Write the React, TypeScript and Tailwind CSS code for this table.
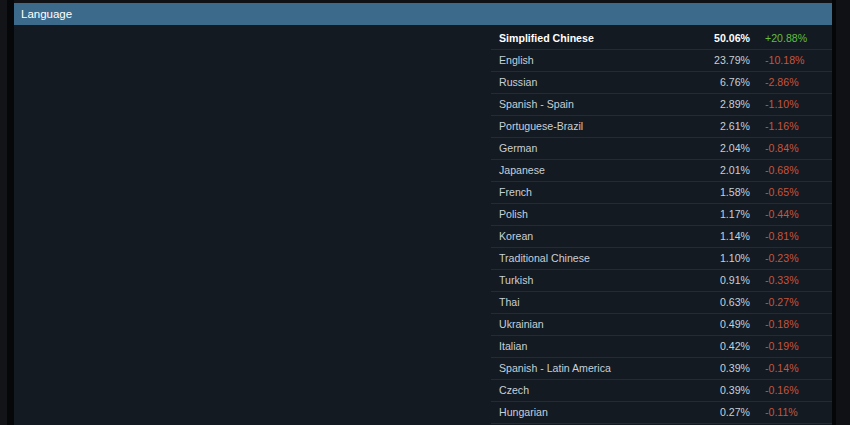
const rows: [string, string, string][] = [
  ["Simplified Chinese", "50.06%", "+20.88%"],
  ["English", "23.79%", "-10.18%"],
  ["Russian", "6.76%", "-2.86%"],
  ["Spanish - Spain", "2.89%", "-1.10%"],
  ["Portuguese-Brazil", "2.61%", "-1.16%"],
  ["German", "2.04%", "-0.84%"],
  ["Japanese", "2.01%", "-0.68%"],
  ["French", "1.58%", "-0.65%"],
  ["Polish", "1.17%", "-0.44%"],
  ["Korean", "1.14%", "-0.81%"],
  ["Traditional Chinese", "1.10%", "-0.23%"],
  ["Turkish", "0.91%", "-0.33%"],
  ["Thai", "0.63%", "-0.27%"],
  ["Ukrainian", "0.49%", "-0.18%"],
  ["Italian", "0.42%", "-0.19%"],
  ["Spanish - Latin America", "0.39%", "-0.14%"],
  ["Czech", "0.39%", "-0.16%"],
  ["Hungarian", "0.27%", "-0.11%"],
];

export default function App() {
  return (
    <div className="flex h-[425px] w-[850px] overflow-hidden bg-[#0f1114] font-['Liberation_Sans',Arial,sans-serif] text-[10.6px]">
      <div className="w-[7px] bg-[#121417]" />
      <div className="w-[7px] bg-[#060708]" />
      <div className="flex w-[818px] flex-col pt-[3px] bg-[#0f1114]">
        <div className="flex h-[22px] items-center bg-[#3b6a8b] px-[7px] pt-[1px] text-[11.5px] text-white">
          Language
        </div>
        <div className="flex flex-1 bg-[#141a21] pt-[3px]">
          <div className="flex-1" />
          <div className="w-[341px]">
            {rows.map(([name, pct, chg], i) => (
              <div
                key={name}
                className={`box-border flex h-[22px] items-center border-b border-[#222c35] ${i === 0 ? "font-bold text-white" : "text-[#c6d0d8]"}`}
              >
                <div className="flex-1 pl-2">{name}</div>
                <div className="w-[80px] text-right">{pct}</div>
                <div className={`w-[82px] pl-[15px] ${i === 0 ? "font-normal text-[#62bf3e]" : "text-[#c4553c]"}`}>
                  {chg}
                </div>
              </div>
            ))}
          </div>
        </div>
      </div>
      <div className="w-[4px] bg-[#050607]" />
      <div className="flex-1 bg-[#0f1114]" />
    </div>
  );
}
